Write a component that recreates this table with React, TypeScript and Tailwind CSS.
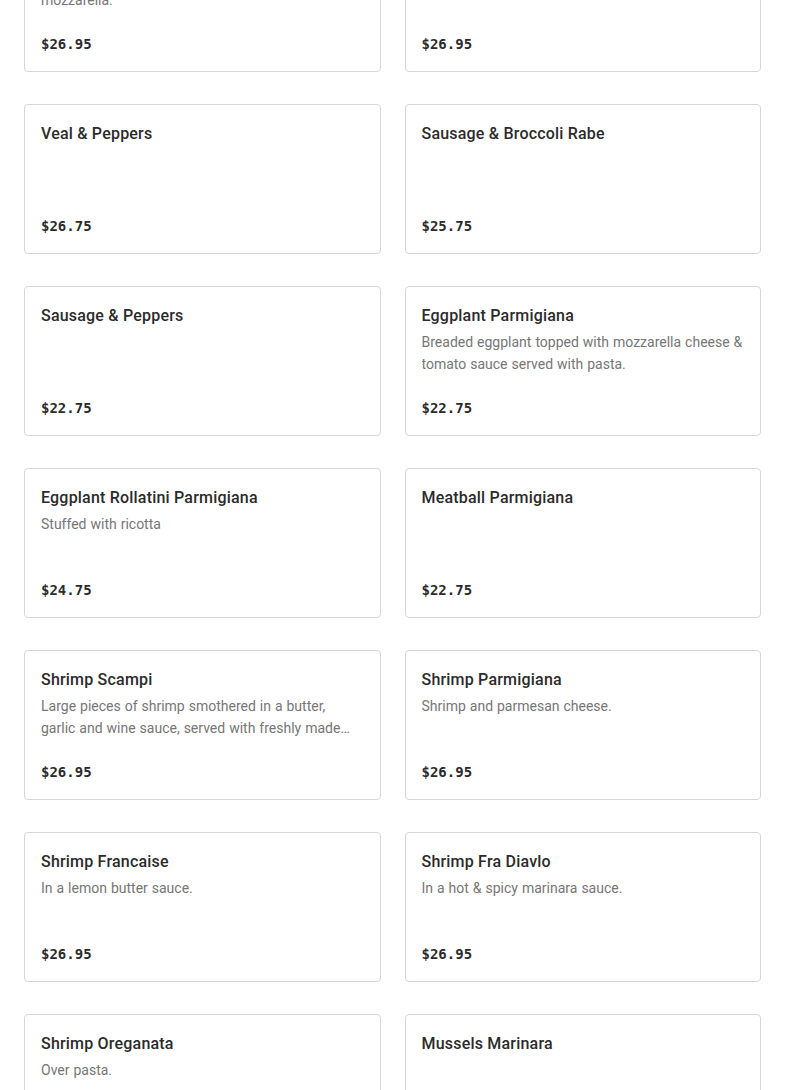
import React from "react";

type Item = { title: string; desc?: React.ReactNode; price: string };

const items: Item[] = [
  {
    title: "Chicken Parmigiana",
    desc: (
      <>
        Chicken cutlet topped with tomato sauce and
        <br />
        mozzarella.
      </>
    ),
    price: "$26.95",
  },
  { title: "Veal Parmigiana", price: "$26.95" },
  { title: "Veal & Peppers", price: "$26.75" },
  { title: "Sausage & Broccoli Rabe", price: "$25.75" },
  { title: "Sausage & Peppers", price: "$22.75" },
  { title: "Eggplant Parmigiana", desc: "Breaded eggplant topped with mozzarella cheese & tomato sauce served with pasta.", price: "$22.75" },
  { title: "Eggplant Rollatini Parmigiana", desc: "Stuffed with ricotta", price: "$24.75" },
  { title: "Meatball Parmigiana", price: "$22.75" },
  { title: "Shrimp Scampi", desc: "Large pieces of shrimp smothered in a butter, garlic and wine sauce, served with freshly made linguine pasta.", price: "$26.95" },
  { title: "Shrimp Parmigiana", desc: "Shrimp and parmesan cheese.", price: "$26.95" },
  { title: "Shrimp Francaise", desc: "In a lemon butter sauce.", price: "$26.95" },
  { title: "Shrimp Fra Diavlo", desc: "In a hot & spicy marinara sauce.", price: "$26.95" },
  { title: "Shrimp Oreganata", desc: "Over pasta.", price: "$26.95" },
  { title: "Mussels Marinara", price: "$24.95" },
];

function Card({ item }: { item: Item }) {
  return (
    <div className="flex h-[150px] flex-col rounded-[4px] border border-[#d6d6d6] bg-white px-4 pt-[17px] pb-[15px]">
      <div className="text-[16px] font-medium leading-6 tracking-[0.2px] text-[#2b2b2b] [font-family:Roboto,'Noto_Sans',sans-serif]">
        {item.title}
      </div>
      {item.desc && (
        <div className="mt-[3px] line-clamp-2 text-[14px] leading-[22px] text-[#767676] [word-spacing:0.5px] [font-family:Roboto,'Noto_Sans',sans-serif]">
          {item.desc}
        </div>
      )}
      <div className="mt-auto text-[14px] font-bold leading-6 text-[#2b2b2b] [font-family:'DejaVu_Sans_Mono',monospace]">
        {item.price}
      </div>
    </div>
  );
}

export default function App() {
  return (
    <div className="h-[1090px] overflow-hidden bg-white">
      <div className="-mt-[78px] grid grid-cols-2 gap-x-6 gap-y-8 px-6">
        {items.map((it, i) => (
          <Card key={i} item={it} />
        ))}
      </div>
    </div>
  );
}
